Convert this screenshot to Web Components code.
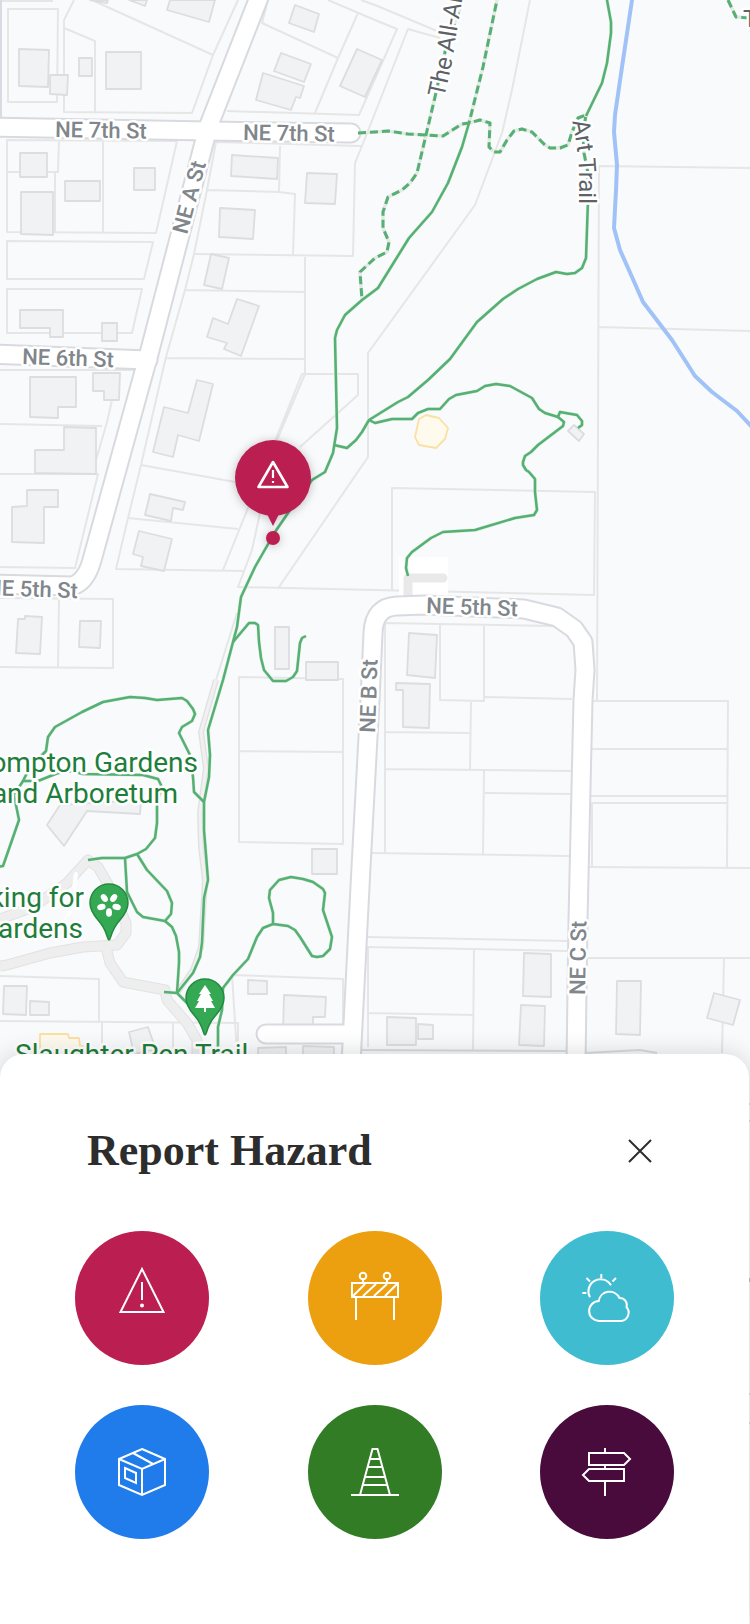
<!DOCTYPE html>
<html lang="en">
<head>
<meta charset="utf-8">
<meta name="viewport" content="width=device-width, initial-scale=1">
<title>Report Hazard</title>
<style>
  body {
    margin: 0;
    min-height: 100vh;
    display: grid;
    font-family: Roboto, sans-serif;
    color: #2d2d2d;
    background: #f9fafc;
  }
  /* the sheet lies over the lower part of the map */
  trail-map,
  hazard-sheet {
    grid-area: 1 / 1;
  }
  hazard-sheet {
    align-self: end;
    margin-right: 1px;
  }
</style>
</head>
<body>

<trail-map></trail-map>

<hazard-sheet>
  <span slot="title">Report Hazard</span>
  <hazard-button icon="warning" label="Warning" color="#bb1e50"></hazard-button>
  <hazard-button icon="barrier" label="Closure" color="#eca010"></hazard-button>
  <hazard-button icon="weather" label="Weather" color="#40bcd1"></hazard-button>
  <hazard-button icon="package" label="Lost item" color="#217ceb"></hazard-button>
  <hazard-button icon="cone" label="Construction" color="#327c25"></hazard-button>
  <hazard-button icon="sign" label="Signage" color="#480b3b"></hazard-button>
</hazard-sheet>

<script>
class TrailMap extends HTMLElement {

  constructor() {
    super()
    const root = this.attachShadow({mode: 'open'})
    root.innerHTML = `
      ${this.buildStyle()}
      <svg viewBox="0 0 750 1624" preserveAspectRatio="xMidYMin slice" role="img" aria-label="Trail map">
        ${this.buildParcels()}
        ${this.buildBuildings()}
        ${this.buildFootways()}
        ${this.buildRoads()}
        ${this.buildTrails()}
        ${this.buildLabels()}
        ${this.buildPlace(109, 903, this.flower())}
        ${this.buildPlace(205, 998, this.tree())}
        ${this.buildHazard(273, 478)}
      </svg>
    `
  }

  buildParcels() {
    return `
      <g class="parcel">
        <path d="M0 1H53M8 9H58L57 102H8ZM74 0L64 20V112L192 113L213 55L238 0M64 28L95 41V112M92 0L213 55"/>
        <path d="M268 0L262 23L338 58L358 13M328 0L375 20L397 29L359 115L227 111M338 58L315 113M361 0L375 5L437 31M375 113L408 29L440 38M375 113L362 146L355 163L353 256L194 254"/>
        <path d="M7 140L177 141L156 233L7 232ZM59 140L58 172H8M55 172V232M103 140V232M7 241L153 242L144 279H7ZM7 289H142L132 333H7Z"/>
        <path d="M361 146L216 142L207 190L194 254L185 290L166 357L141 465L128 518L116 569L245 571M280 146L279 192M207 190L279 192L295 194L293 255M305 257V374M185 290L305 292M166 358L305 359"/>
        <path d="M0 370H136M112 400L107 422L96 460M0 424L102 426M0 474H98L75 568L0 567M141 465L235 482M128 518L238 529"/>
        <path d="M223 570L302 374H358V395L300 447M305 374L277 440M260 513L252 550L238 587L375 590L594 595L595 492L392 488V590M530 0L512 90L502 133L493 157L475 205L368 353V457L279 587"/>
        <path d="M750 168L599 166L597 701M598 327L750 331"/>
        <path d="M0 598L113 599V668L0 667M59 600L58 667M239 677L343 679V844L239 842ZM239 751L343 752M237 613L216 680"/>
        <path d="M554 626L385 623V853M440 624V700L484 701V626M485 697L572 699M471 702L470 769M385 732L470 733M385 769L571 771M484 770L483 854M485 793L570 794M371 853L569 856"/>
        <path d="M368 937L567 941M368 1047V947L567 951M474 950L473 1050M368 1013L473 1015"/>
        <path d="M593 701H728L727 867M592 749H727M591 796H727M592 867V803H727M589 867L750 868M588 958H750M724 958L722 1053"/>
        <path d="M0 976L99 979V1021M0 1021L238 1023V1054M102 1022V1054M173 1023V1054M237 1053L232 975L343 979V1027"/>
      </g>
      <path class="edge" d="M1 0V117M360 1050L567 1051M585 1053L640 1050L657 1053M343 1041V1060M745 1104H755M745 1121H755M745 1394H755M745 1423H755"/>
    `
  }

  buildBuildings() {
    const shapes = [
      "90,0 107,3 108,0", "129,0 145,6 147,0", "170,0 167,10 209,22 215,0",
      "19,49 49,50 48,87 19,86", "50,75 68,75 67,95 50,94", "79,58 92,58 92,76 79,76", "106,52 141,52 141,89 106,89",
      "295,5 319,14 314,32 289,23", "281,53 311,64 304,82 274,71", "263,73 304,86 300,98 296,97 291,110 256,100",
      "357,49 382,60 365,97 340,86", "20,153 47,153 47,177 20,177", "21,192 53,192 53,235 21,234",
      "65,181 100,181 100,201 65,201", "134,168 155,168 155,190 134,190", "232,155 278,158 277,179 231,176",
      "307,173 337,174 335,204 305,203", "220,208 255,210 253,239 219,237", "211,254 229,258 222,289 204,285",
      "237,299 259,306 241,356 224,349 227,343 207,337 213,318 228,324",
      "20,310 63,310 63,337 50,337 50,328 20,328", "102,323 117,323 117,341 102,341",
      "30,377 76,377 76,407 58,407 58,418 30,417", "93,373 120,373 119,400 104,400 104,391 93,391",
      "64,427 96,428 96,474 35,473 35,450 64,450", "27,490 58,490 58,507 44,507 44,543 12,542 12,507 27,506",
      "197,380 213,384 199,441 178,435 173,457 153,452 164,407 188,413",
      "150,494 185,502 183,510 173,508 171,521 145,515", "139,531 172,539 164,571 141,566 143,557 133,554",
      "25,616 42,617 40,654 16,653 18,619 25,619", "80,621 101,621 100,648 79,647",
      "275,627 289,627 289,669 275,669", "306,662 338,662 338,680 306,680",
      "574,425 584,434 579,441 568,431", "409,633 437,635 435,678 407,675",
      "396,683 430,684 429,728 403,727 403,690 396,690", "60,805 47,825 64,846 87,811 140,814 141,800",
      "312,849 337,849 337,874 312,874", "4,986 27,986 26,1015 3,1014", "30,1001 49,1002 49,1015 30,1015",
      "129,1032 148,1027 156,1050 134,1054", "248,980 267,981 267,994 248,994",
      "284,995 326,997 325,1017 313,1017 313,1032 283,1032", "258,1048 286,1047 286,1060 258,1060",
      "303,1046 334,1047 334,1060 303,1060", "524,953 551,954 551,997 523,996",
      "521,1005 545,1006 544,1046 519,1045", "387,1017 416,1018 416,1045 387,1045",
      "418,1024 433,1025 433,1039 418,1039", "617,981 641,981 640,1035 616,1034", "714,993 740,1000 733,1025 707,1018"
    ]
    const yellow = [
      "426,415 439,418 448,428 445,439 436,448 419,445 415,437 419,419",
      "40,1034 68,1034 69,1038 79,1038 80,1046 88,1047 88,1060 40,1060"
    ]
    let dom = `<g class="building">`
    shapes.forEach(points => dom += `<polygon points="${points}"/>`)
    dom += `</g><g class="yellow">`
    yellow.forEach(points => dom += `<polygon points="${points}"/>`)
    return dom + "</g>"
  }

  buildFootways() {
    const paths = `
      <path d="M0 919L33 907L67 883L88 860L98 867L113 893L126 923V933L117 945L83 947L50 953L7 965L0 966"/>
      <path d="M106 947L110 963L123 982L165 990L167 1000L187 1023L197 1040V1060"/>
    `
    return `
      <rect x="399" y="557" width="49" height="40" fill="#fff"/>
      <path class="drive" d="M408 600V578H443"/>
      <g class="footway-edge">${paths}</g>
      <g class="footway">${paths}</g>
      <path d="M76 874L71 910L66 918" fill="none" stroke="#fff" stroke-width="4" stroke-linecap="round"/>
      <path class="footway-edge thin" d="M216 680L201 732L206 768L200 813L201 847L205 880L201 947L193 970L177 993"/>
      <path class="footway thin" d="M216 680L201 732L206 768L200 813L201 847L205 880L201 947L193 970L177 993"/>
    `
  }

  buildRoads() {
    const roads = `
      <path d="M262 -10L258 0L209 125L204 143L150 350L92 560Q86 582 72 586L-10 584"/>
      <path d="M-10 127L209 131L351 133"/>
      <path d="M-10 354L148 360"/>
      <path d="M351 1064L361 867L370 700L373 633Q374 607 397 606L425 605L524 609L557 617L574 629L583 642L585 670L583 700L578 920L576 1064"/>
      <path d="M266 1034H350"/>
    `
    return `<g class="casing">${roads}</g><g class="road">${roads}</g>`
  }

  buildTrails() {
    const solid = `
      <path d="M469 123L462 147L448 183L432 212L409 238L378 288L362 300L345 315L337 330L335 338L337 428L333 453L325 472L312 480L288 513L275 532L255 567L241 597L237 627L233 642L223 680L208 730L210 755L209 777L204 802V830L208 880L204 898L202 943L200 957L193 973L177 993"/>
      <path d="M607 -4V0L611 22V33L607 63L602 83L586 116M588 200L586 258L582 268L575 273L567 274L556 272L537 279L518 289L503 299L477 322L450 359L428 380L408 397L398 402L369 420L362 432L356 440L347 448L334 445"/>
      <path d="M369 420L375 423L392 419H412L418 413L428 409H440L449 399L456 395L477 391L485 386L496 384L510 386L532 398L539 409L545 413L558 417L560 412L577 415L582 421V425L578 428"/>
      <path d="M558 417L564 422L563 426L538 445L531 452L525 456L523 462V465L526 470L529 472L535 479V492L537 510L534 515L515 518L475 530L443 532L431 538L412 552L407 558L406 568L408 576"/>
      <path d="M233 642L249 623H255L258 625L259 642L261 658L264 670L273 681H286L293 677L297 671L300 643L302 638L306 636"/>
      <path d="M-4 867L3 866L19 820L14 795L23 781L30 767L46 751L48 737L55 727L82 712L103 702L130 697L145 698L157 700L182 698L187 701L193 709L195 714L192 721L182 727L179 733L190 755L193 777L194 792L204 802"/>
      <path d="M23 781H38L58 773L72 771L83 774L143 775L158 779L162 787L157 803V823L155 838L146 849L137 854L125 858H102L88 860"/>
      <path d="M125 858L127 892L137 912L143 917L165 921L171 914L172 903L167 891L147 870L137 854"/>
      <path d="M165 921L172 927L176 936L179 952V963L177 993L164 992M177 993L187 1003L205 1025"/>
      <path d="M218 1060V1027L222 1010L223 988L233 975L248 959L257 937L263 928L273 924L288 926L295 930L300 937L312 956L317 957L323 956L330 949L332 937L323 910L325 893L323 889L313 882L303 879L291 877L279 880L270 890L269 898L273 913V924"/>
    `
    const dashed = `
      <path d="M467 -10L447 43L435 97L426 135L417 173L410 183L402 190L388 197L383 212V228L389 242L387 252L375 258L360 272L362 300"/>
      <path d="M499 -8L497 0L483 67L469 123"/>
      <path d="M358 133L375 132L388 131L408 134L443 136L462 124L469 123L480 120L490 123L489 147L494 152H500L507 140L514 131L522 129L532 132L545 145L550 148H560L568 145L572 132L578 118L586 115L583 133L584 153L588 173V200"/>
      <path d="M728 0L736 17L750 18"/>
    `
    return `
      <path class="river" d="M632 -4V0L622 67L615 115L614 132L617 165L616 190L614 228L620 250L632 277L643 302L672 340L695 376L712 392L737 411L750 425L760 436M745 1280H755"/>
      <g class="halo">${solid}</g>
      <g class="halo grey">${dashed}</g>
      <g class="trail">${solid}</g>
      <g class="trail dashed">${dashed}</g>
    `
  }

  buildLabels() {
    return `
      <defs>
        <path id="all" d="M444 98L453 58Q457 26 468 -30"/>
        <path id="art" d="M572 121Q578 148 579 170V230"/>
      </defs>
      <g class="street">
        <text transform="translate(55 137) rotate(1)">NE 7th St</text>
        <text transform="translate(243 140) rotate(1)">NE 7th St</text>
        <text transform="translate(22 364) rotate(2)">NE 6th St</text>
        <text transform="translate(-14 595) rotate(2)">NE 5th St</text>
        <text transform="translate(426 613) rotate(2)">NE 5th St</text>
        <text transform="translate(187 235) rotate(-75)">NE A St</text>
        <text transform="translate(375 733) rotate(-88)">NE B St</text>
        <text transform="translate(585 995) rotate(-89)">NE C St</text>
      </g>
      <g class="path-name">
        <text><textPath href="#all">The All-Ar</textPath></text>
        <text><textPath href="#art">Art Trail</textPath></text>
        <text x="743" y="27">T</text>
      </g>
      <g class="park">
        <text x="198" y="772" text-anchor="end">Compton Gardens</text>
        <text x="178" y="803" text-anchor="end">and Arboretum</text>
        <text x="84" y="907" text-anchor="end">Parking for</text>
        <text x="83" y="938" text-anchor="end">Gardens</text>
        <text x="15" y="1064">Slaughter Pen Trail</text>
      </g>
    `
  }

  buildPlace(x, y, glyph) {
    return `
      <g transform="translate(${x} ${y})">
        <path d="M0 37C-2 37 -1 28 -11 17C-17 10 -19 6 -19 0A19 19 0 0 1 19 0C19 6 17 10 11 17C1 28 2 37 0 37Z" fill="#34a853" stroke="#238a40" stroke-width="1.5"/>
        ${glyph}
      </g>
    `
  }

  flower() {
    let dom = `<g fill="#fff">`
    for(let i = 0; i < 5; i ++) {
      dom += `<ellipse cx="0" cy="8" rx="3" ry="4.3" transform="translate(0 1.5) rotate(${i * 72})"/>`
    }
    return dom + "</g>"
  }

  tree() {
    return `<path d="M0 -13L6 -4H4L8 3H6L10 10H1V14H-1V10H-10L-6 3H-8L-4 -4H-6Z" fill="#fff"/>`
  }

  buildHazard(x, y) {
    return `
      <g class="hazard" transform="translate(${x} ${y})">
        <path d="M-6 36H6L0 48Z"/>
        <circle r="38"/>
        <circle cy="60" r="7"/>
        <path class="mark" d="M0 -16L14.500 9H-14.500Z"/>
        <path class="mark thin" d="M0 -8V0M0 3V5"/>
      </g>
    `
  }

  buildStyle() {
    return `
      <style>
        :host {
          display: block;
          position: relative;
          overflow: hidden;
        }
        svg {
          position: absolute;
          inset: 0;
          width: 100%;
          height: 100%;
          stroke-linejoin: round;
        }
        .parcel, .edge, .casing, .road, .river, .halo, .trail, .drive, .footway, .footway-edge {
          fill: none;
        }
        .parcel {
          stroke: #e6e6e6;
          stroke-width: 2;
        }
        .edge {
          stroke: #dadbe0;
          stroke-width: 2;
        }
        .building {
          fill: #f1f2f4;
          stroke: #dcdde0;
          stroke-width: 1.8;
        }
        .yellow {
          fill: #fffaee;
          stroke: #fbe0a4;
          stroke-width: 1.8;
        }
        .casing {
          stroke: #d9dae0;
          stroke-width: 21;
          stroke-linecap: round;
        }
        .road {
          stroke: #fff;
          stroke-width: 17;
          stroke-linecap: round;
        }
        .footway-edge {
          stroke: #e2e2e2;
          stroke-width: 11;
        }
        .footway {
          stroke: #eeeeee;
          stroke-width: 9;
        }
        .footway-edge.thin {
          stroke-width: 6;
        }
        .footway.thin {
          stroke: #f1f1f1;
          stroke-width: 3;
        }
        .drive {
          stroke: #e9e9e9;
          stroke-width: 9;
          stroke-linecap: round;
        }
        .river {
          stroke: #a0c2f6;
          stroke-width: 4;
        }
        .halo {
          stroke: #d8eede;
          stroke-width: 3.5;
        }
        .halo.grey {
          stroke: #e3eae4;
        }
        .trail {
          stroke: #56af73;
          stroke-width: 2.5;
        }
        .dashed {
          stroke-dasharray: 8 4;
          stroke-width: 3;
        }
        text {
          font-family: Roboto, sans-serif;
          paint-order: stroke;
          stroke: #fff;
          stroke-width: 5px;
        }
        .street {
          font-size: 22px;
          font-weight: 500;
          fill: #80868b;
        }
        .path-name {
          font-size: 24px;
          fill: #5c6267;
        }
        .park {
          font-size: 28px;
          fill: #1e7e3b;
        }
        .hazard {
          fill: #bb1e50;
          filter: drop-shadow(0 1px 5px rgba(0, 0, 0, .25));
        }
        .mark {
          fill: none;
          stroke: #fff;
          stroke-width: 2.6;
        }
        .mark.thin {
          stroke-width: 2.2;
        }
      </style>
    `
  }

}

class HazardSheet extends HTMLElement {

  constructor() {
    super()
    const root = this.attachShadow({mode: 'open'})
    root.innerHTML = `
      <style>
        :host {
          display: block;
          position: relative;
          box-sizing: border-box;
          padding: 67px 10% 85px;
          background: #fff;
          border-radius: 24px 24px 0 0;
          box-shadow: 0 0 24px rgba(0, 0, 0, .16);
        }
        header {
          display: flex;
          align-items: center;
          justify-content: space-between;
          padding: 0 12px;
          margin-bottom: 50px;
        }
        h1 {
          margin: 0;
          font: bold 44px/60px "Liberation Serif", serif;
        }
        button {
          display: grid;
          place-items: center;
          width: 44px;
          height: 44px;
          padding: 0;
          border: 0;
          background: none;
          color: inherit;
          cursor: pointer;
        }
        .grid {
          display: grid;
          grid-template-columns: repeat(3, auto);
          justify-content: space-between;
          row-gap: 40px;
        }
      </style>
      <header>
        <h1><slot name="title"></slot></h1>
        <button type="button" aria-label="Close">
          <svg width="24" height="24" viewBox="0 0 24 24" fill="none" stroke="currentColor" stroke-width="2">
            <path d="M1 1L23 23M23 1L1 23"/>
          </svg>
        </button>
      </header>
      <div class="grid"><slot></slot></div>
    `
    root.querySelector("button").addEventListener("click", () => this.remove())
  }

}

// icons share the 134 unit box of the round button
const ICONS = {
  warning: `
    <path d="M67 38L45.500 81H88.500ZM67 51V69"/>
    <circle cx="67" cy="74.500" r="2" fill="currentColor" stroke="none"/>
  `,
  barrier: `
    <circle cx="55" cy="45" r="3.300"/>
    <circle cx="79" cy="45" r="3.300"/>
    <path d="M55 48V52M79 48V52M44 52H90V66H44ZM48 66V89M86 66V89"/>
    <path d="M45 65L57 53M55 65L68 53M66 65L79 53M77 65L89 53"/>
  `,
  weather: `
    <path d="M50 66.300A12 12 0 1 1 71 54.300M61.300 43V47M42.300 62H46.300M46.500 47L50 50.500M76 47L72.500 50.500"/>
    <path d="M59.500 90A10 10 0 0 1 58.700 70A11 11 0 0 1 79.500 67A7 7 0 0 1 86.500 76A8.500 8.500 0 0 1 81.500 90Z"/>
  `,
  package: `
    <path d="M67 44L90 54V80L67 90L44 80V54ZM44 54L67 64L90 54M67 64V90M58 48L78 59"/>
    <path d="M50 63L61 68V78L50 73Z"/>
  `,
  cone: `
    <path d="M43 90H91M52 90L64.500 44H69.500L82 90M62 54H72M60 62H74M57 72H77M55 80H79"/>
  `,
  sign: `
    <path d="M65 43V48M65 60V64M65 76V91M49 48H84L90 54L84 60H49ZM84 64V76H49L43 70L49 64Z"/>
  `
}

class HazardButton extends HTMLElement {

  constructor() {
    super()
    const icon = ICONS[this.getAttribute("icon")] || ""
    const label = this.getAttribute("label") || ""
    const color = this.getAttribute("color") || "#333"
    const root = this.attachShadow({mode: 'open'})
    root.innerHTML = `
      <style>
        :host {
          display: block;
        }
        button {
          display: block;
          width: 134px;
          height: 134px;
          padding: 0;
          border: 0;
          border-radius: 50%;
          background: ${color};
          color: #fff;
          cursor: pointer;
        }
        svg {
          display: block;
          width: 100%;
          height: 100%;
        }
      </style>
      <button type="button" aria-label="${label}">
        <svg viewBox="0 0 134 134" fill="none" stroke="currentColor" stroke-width="2">${icon}</svg>
      </button>
    `
  }

}

customElements.define("trail-map", TrailMap)
customElements.define("hazard-sheet", HazardSheet)
customElements.define("hazard-button", HazardButton)
</script>
</body>
</html>
